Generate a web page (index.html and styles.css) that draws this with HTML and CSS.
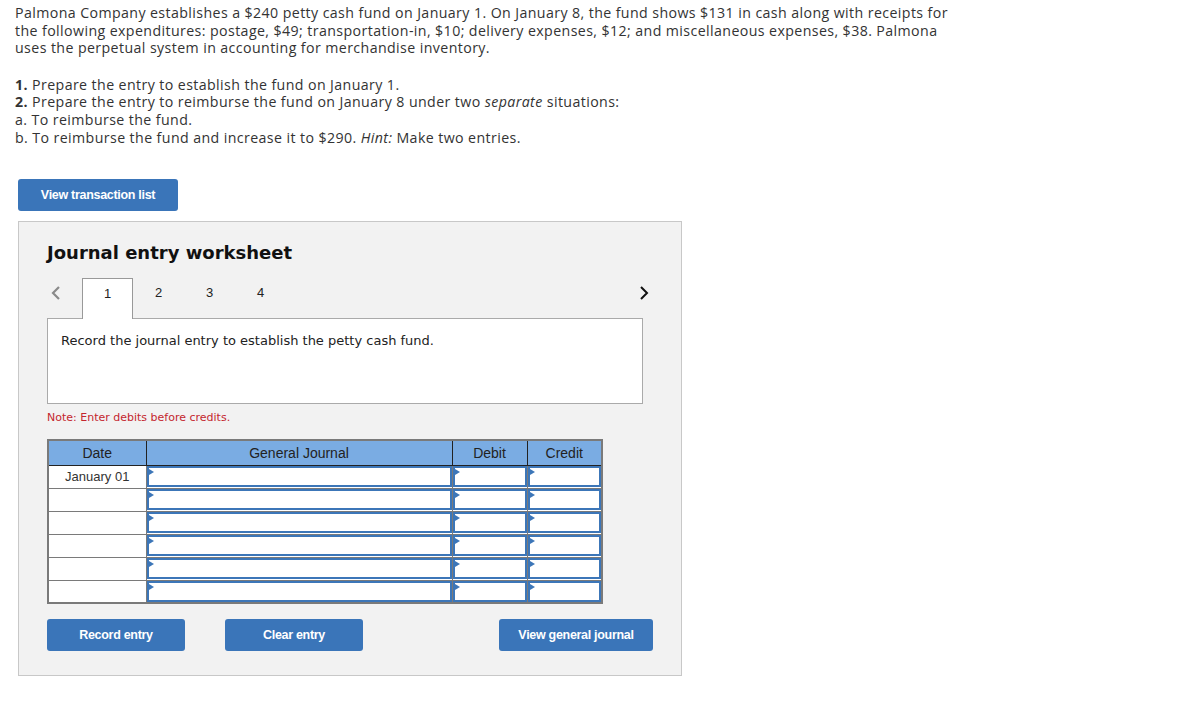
FILE: index.html
```html
<!DOCTYPE html>
<html>
<head>
<meta charset="utf-8">
<link rel="stylesheet" href="styles.css">
</head>
<body>
<div class="page">
  <p class="intro">Palmona Company establishes a $240 petty cash fund on January 1. On January 8, the fund shows $131 in cash along with receipts for the following expenditures: postage, $49; transportation-in, $10; delivery expenses, $12; and miscellaneous expenses, $38. Palmona uses the perpetual system in accounting for merchandise inventory.</p>
  <p class="tasks"><b>1.</b> Prepare the entry to establish the fund on January 1.<br><b>2.</b> Prepare the entry to reimburse the fund on January 8 under two <i>separate</i> situations:<br>a. To reimburse the fund.<br>b. To reimburse the fund and increase it to $290. <i>Hint:</i> Make two entries.</p>

  <button class="btn btn-list">View transaction list</button>

  <div class="panel">
    <h2 class="title">Journal entry worksheet</h2>
    <div class="tabrow">
      <span class="chev chev-left"><svg width="10" height="16" viewBox="0 0 10 16"><path d="M8 2 L2 8 L8 14" fill="none" stroke="#8a8a8a" stroke-width="2.2"/></svg></span>
      <div class="tab active">1</div>
      <div class="tab">2</div>
      <div class="tab">3</div>
      <div class="tab">4</div>
      <span class="chev chev-right"><svg width="10" height="16" viewBox="0 0 10 16"><path d="M2 2 L8 8 L2 14" fill="none" stroke="#111" stroke-width="2"/></svg></span>
    </div>
    <div class="prompt">Record the journal entry to establish the petty cash fund.</div>
    <div class="note">Note: Enter debits before credits.</div>

    <table class="journal">
      <thead>
        <tr><th class="c-date">Date</th><th class="c-gj">General Journal</th><th class="c-num">Debit</th><th class="c-num">Credit</th></tr>
      </thead>
      <tbody>
        <tr><td class="date">January 01</td><td><div class="inp"></div></td><td><div class="inp"></div></td><td><div class="inp"></div></td></tr>
        <tr><td class="date"></td><td><div class="inp"></div></td><td><div class="inp"></div></td><td><div class="inp"></div></td></tr>
        <tr><td class="date"></td><td><div class="inp"></div></td><td><div class="inp"></div></td><td><div class="inp"></div></td></tr>
        <tr><td class="date"></td><td><div class="inp"></div></td><td><div class="inp"></div></td><td><div class="inp"></div></td></tr>
        <tr><td class="date"></td><td><div class="inp"></div></td><td><div class="inp"></div></td><td><div class="inp"></div></td></tr>
        <tr><td class="date"></td><td><div class="inp"></div></td><td><div class="inp"></div></td><td><div class="inp"></div></td></tr>
      </tbody>
    </table>

    <div class="actions">
      <button class="btn btn-record">Record entry</button>
      <button class="btn btn-clear">Clear entry</button>
      <button class="btn btn-view">View general journal</button>
    </div>
  </div>
</div>
</body>
</html>
```

FILE: styles.css
```css
* { box-sizing: border-box; }
html, body { margin: 0; padding: 0; background: #fff; }
.page {
  padding: 4px 15px 0 15px;
  font-family: "Open Sans", Lato, sans-serif;
  color: #333;
}
.intro, .tasks {
  margin: 0;
  width: 945px;
  font-size: 14.2px;
  letter-spacing: 0.4px;
  line-height: 17.6px;
}
.tasks { margin-top: 19px; }
.tasks b { font-weight: 700; }

.btn {
  display: inline-flex;
  align-items: center;
  justify-content: center;
  height: 32px;
  border: none;
  border-radius: 3px;
  background: #3a75b9;
  color: #fff;
  font-family: "Liberation Sans", Arial, sans-serif;
  font-weight: 700;
  font-size: 12.5px;
  letter-spacing: -0.3px;
  padding: 0;
  cursor: pointer;
}
.btn-list { width: 160px; margin: 33px 0 0 3px; display: flex; }

.panel {
  margin: 10px 0 0 3px;
  width: 664px;
  background: #f2f2f2;
  border: 1px solid #c8c8c8;
  padding: 20px 28px 24px 28px;
}
.title {
  margin: 0;
  font-family: "DejaVu Sans", Verdana, sans-serif;
  font-weight: 700;
  font-size: 18px;
  line-height: 22px;
  color: #111;
}
.tabrow {
  display: flex;
  align-items: flex-start;
  margin-top: 14px;
  height: 41px;
  position: relative;
  z-index: 1;
}
.chev { display: flex; align-items: center; height: 30px; }
.chev-left { width: 35px; padding-left: 4px; }
.chev-right { margin-left: auto; margin-right: 4px; }
.tab {
  width: 51px;
  height: 41px;
  text-align: center;
  padding-top: 7px;
  font-family: "Liberation Sans", Arial, sans-serif;
  font-size: 13px;
  color: #222;
}
.tab.active {
  background: #fff;
  border: 1px solid #999;
  border-bottom: none;
}
.prompt {
  margin-top: -1px;
  width: 596px;
  height: 86px;
  background: #fff;
  border: 1px solid #aaa;
  padding: 14px 13px;
  font-family: "DejaVu Sans", Verdana, sans-serif;
  font-size: 13px;
  color: #222;
}
.note {
  margin-top: 7px;
  font-family: "DejaVu Sans", Verdana, sans-serif;
  font-size: 11px;
  line-height: 13px;
  color: #c4262e;
}
.journal {
  margin-top: 15px;
  border-collapse: collapse;
  border: 2px solid #7a7a7a;
  font-family: "Liberation Sans", Arial, sans-serif;
  font-size: 13px;
  background: #fff;
}
.journal th {
  background: #7aace3;
  color: #222;
  font-weight: 400;
  font-size: 14px;
  height: 25px;
  padding: 0;
  border-left: 1px solid #222;
  border-right: 1px solid #222;
  border-bottom: 1px solid #222;
}
.journal th:first-child { border-left: none; }
.journal th:last-child { border-right: none; }
.c-date { width: 98px; }
.c-gj { width: 306px; }
.c-num { width: 75px; }
.journal td {
  padding: 0;
  height: 23px;
  border: 1px solid #7a7a7a;
}
.journal td.date {
  text-align: center;
  color: #333;
}
.inp {
  position: relative;
  height: 21px;
  border: 2px solid #3c76b8;
  background: #fff;
}
.inp::before {
  content: "";
  position: absolute;
  left: 0;
  top: 1px;
  border-left: 5px solid #3c76b8;
  border-top: 3px solid transparent;
  border-bottom: 3px solid transparent;
}
.actions {
  display: flex;
  margin-top: 15px;
}
.btn-record, .btn-clear { width: 138px; }
.btn-clear { margin-left: 40px; }
.btn-view { width: 154px; margin-left: auto; }
```
